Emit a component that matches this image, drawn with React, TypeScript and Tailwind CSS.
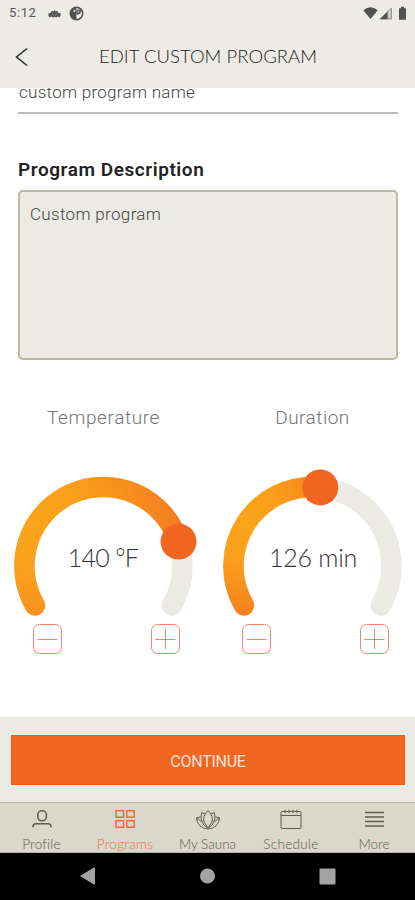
import type { ReactNode } from "react";

const ORANGE = "#f16722";

type DialProps = {
  id: string;
  value: string;
  knob: [number, number];
  spread: number;
  largeArc?: boolean;
  valueClass: string;
};

// 180 x 150 box, arc centre at (90.4, 98), radius 79
function Dial({ id, value, knob, spread, largeArc, valueClass }: DialProps) {
  const [x, y] = knob;
  return (
    <div className="relative h-[150px] w-[180px]">
      <svg width="180" height="150" viewBox="0 0 180 150" fill="none" className="overflow-visible">
        <defs>
          <radialGradient id={id} gradientUnits="userSpaceOnUse" cx="22" cy="55" r={spread}>
            <stop offset="0" stopColor="#fba51a" />
            <stop offset="0.35" stopColor="#fa9e1b" />
            <stop offset="1" stopColor="#f37421" />
          </radialGradient>
        </defs>
        <path d="M22 137.5 A79 79 0 1 1 158.8 137.5" stroke="#ebebe4" strokeWidth="20.5" strokeLinecap="round" />
        <path d={`M22 137.5 A79 79 0 ${largeArc ? 1 : 0} 1 ${x} ${y}`} stroke={`url(#${id})`} strokeWidth="20.5" strokeLinecap="butt" />
        <circle cx="22" cy="137.5" r="10.25" fill={`url(#${id})`} />
        <circle cx={x} cy={y} r="18" fill={ORANGE} />
      </svg>
      <div className={`absolute inset-x-0 top-[73px] whitespace-nowrap text-center font-[Lato,sans-serif] text-[25px] font-light leading-8 text-[#333] ${valueClass}`}>
        {value}
      </div>
    </div>
  );
}

function StepButton({ plus }: { plus?: boolean }) {
  return (
    <button className="block h-[30px] w-[29px]" aria-label={plus ? "Increase" : "Decrease"}>
      <svg width="29" height="30" viewBox="0 0 29 30" fill="none" stroke="#f3836c" strokeWidth="1">
        <rect x="0.5" y="0.5" width="28" height="29" rx="6" />
        <path d={plus ? "M4.5 15.5h20M14.5 5v20" : "M4.5 15.5h20"} />
      </svg>
    </button>
  );
}

function Tab({ label, active, labelClass = "", children }: { label: string; active?: boolean; labelClass?: string; children: ReactNode }) {
  return (
    <div className={`flex w-[83px] flex-col items-center ${active ? "text-[#f4683c]" : "text-[#5d5d55]"}`}>
      <svg width="26" height="24" viewBox="0 0 26 24" fill="none" stroke="currentColor" strokeWidth="1" className="mt-[6px] shrink-0">
        {children}
      </svg>
      <span className={`whitespace-nowrap font-[Lato,sans-serif] text-[13.5px] leading-[22px] ${labelClass}`}>{label}</span>
    </div>
  );
}

export default function App() {
  return (
    <div className="flex h-[900px] w-[415px] flex-col overflow-hidden bg-white font-[Roboto,sans-serif]">
      {/* Header */}
      <header className="h-[88px] shrink-0 bg-[#ecebe4]">
        <div className="flex h-[26px] items-center pl-[9px] pr-[7px] text-[#555]">
          <span className="text-[13px] tracking-[0.6px]">5:12</span>
          <svg width="13" height="8" viewBox="0 0 13 8" className="ml-[12px] mt-px" fill="#555">
            <path d="M1.2 7.2C.2 5.5.2 4 .6 3.2L2.6 3C3 1.5 3.7 1 4.3 1L5.2 1.5L6.5 0L7.8 1.5L8.7 1C9.5 1 10 1.5 10.4 3L12.4 3.2C12.8 4 12.8 5.5 11.8 7.2L9.6 6.5L8.4 7.5L6.5 6.7L4.6 7.5L3.4 6.5Z" />
            <path d="M4.5 3.5l.8 2M8.5 3.5l-.8 2" stroke="#ecebe4" strokeWidth="0.4" />
          </svg>
          <svg width="15" height="15" viewBox="0 0 15 15" className="ml-[8px]">
            <circle cx="7.5" cy="7.5" r="6.2" fill="#ecebe4" stroke="#505050" strokeWidth="1.6" />
            <path d="M7.2 1.3A6.2 6.2 0 0 0 4.8 13Z" fill="#505050" />
            <path d="M4.8 1.9H7.4V13.6H4.8Z" fill="#505050" />
            <path d="M4.6 3.8h1.7v2H4.6Z" fill="#ecebe4" />
            <path d="M7.4 3.4h4.4v3.4L9.6 8.6H7.4Z" fill="#505050" />
            <path d="M8.5 4.6h1.7v1.8H8.5Z" fill="#b9b8b2" />
          </svg>
          <svg width="45" height="15" viewBox="0 0 45 15" className="ml-auto" fill="#515151">
            <path d="M.3 4.2Q7.5-1.6 14.7 4.2L7.5 13Z" />
            <path d="M16.7 13.3 28.7 1.4V13.3Z" fill="#969691" />
            <path d="M16.7 13.3 24.3 5.7V13.3Z" />
            <path d="M24.8 5.7 28.2 2.3V12.8H24.8Z" fill="#d8d7d1" stroke="#777" strokeWidth="0.7" />
            <path d="M36 2.2h2V.7h3v1.5h2v11.5h-7Z" />
          </svg>
        </div>
        <div className="relative flex h-[62px] items-center justify-center">
          <svg width="14" height="20" viewBox="0 0 14 20" className="absolute left-[15px] top-[21px]" fill="none" stroke="#303030" strokeWidth="1.6">
            <path d="M12 1.5 1.5 10 12 18.5" />
          </svg>
          <h1 className="whitespace-nowrap pl-px font-[Lato,sans-serif] text-[18.5px] font-light tracking-[0.05px] text-[#222]">EDIT CUSTOM PROGRAM</h1>
        </div>
      </header>

      {/* Form */}
      <main className="h-[629px] shrink-0 overflow-hidden pl-[18px] pr-[17px]">
        <div className="-mt-[9px] h-[35px] border-b-2 border-[#bcbcbc] pt-px text-[17px] font-light leading-[24px] tracking-[0.28px] text-[#444]">
          <span className="ml-px">custom program name</span>
        </div>
        <h2 className="mt-[43px] text-[19px] font-semibold leading-[26px] tracking-[0.56px] text-[#222]">Program Description</h2>
        <div className="mt-[7px] h-[170px] rounded-[5px] border-2 border-[#babaa4] bg-[#ebebe4] px-[10px] py-[10px] text-[17px] font-light leading-[24px] tracking-[0.33px] text-[#444]">
          Custom program
        </div>

        <div className="-ml-[18px] -mr-[17px] mt-[43px] flex">
          <section className="w-[207px] pl-[13px]">
            <h3 className="w-[181px] text-center text-[19px] font-light leading-[30px] tracking-[0.6px] text-[#747474]">Temperature</h3>
            <div className="mt-[35px]">
              <Dial id="temp" value="140 °F" knob={[165.53, 73.59]} spread={165} largeArc valueClass="tracking-[-0.7px]" />
            </div>
            <div className="ml-[20px] mt-[6px] flex gap-[89px]">
              <StepButton />
              <StepButton plus />
            </div>
          </section>
          <section className="w-[208px] pl-[15px]">
            <h3 className="w-[181px] text-center text-[19px] font-light leading-[30px] tracking-[0.5px] text-[#747474]">Duration</h3>
            <div className="mt-[35px]">
              <Dial id="time" value="126 min" knob={[98.3, 19.4]} spread={115} valueClass="pl-[2px] tracking-[-0.25px]" />
            </div>
            <div className="ml-[20px] mt-[6px] flex gap-[89px]">
              <StepButton />
              <StepButton plus />
            </div>
          </section>
        </div>
      </main>

      {/* Action */}
      <div className="h-[85px] shrink-0 bg-[#ebebe4] pl-[11px] pr-[10px] pt-[18px]">
        <button className="block h-[50px] w-full border border-[#e95b18] bg-[#f16722] pt-[3px] text-[16px] tracking-[-0.25px] text-[#ffe3da]">CONTINUE</button>
      </div>

      {/* Tabs */}
      <nav className="flex h-[51px] shrink-0 border-y border-[#b5b5a9] bg-[#d9d8ca]">
        <Tab label="Profile" labelClass="font-light tracking-[0.2px]">
          <rect x="8.8" y="1.8" width="8.6" height="10" rx="4" strokeWidth="1.6" />
          <path d="M4 18.3v-.8Q4 14.8 7 14.8h12q3 0 3 2.7v.8" strokeWidth="1.6" />
        </Tab>
        <Tab label="Programs" active labelClass="pl-px font-light tracking-[0.3px]">
          <g strokeWidth="1.5">
            <rect x="4" y="1.7" width="7.5" height="6.5" />
            <rect x="14.7" y="1.7" width="7.5" height="6.5" />
            <rect x="4" y="11.7" width="7.5" height="6.5" />
            <rect x="14.7" y="11.7" width="7.5" height="6.5" />
          </g>
        </Tab>
        <Tab label="My Sauna" labelClass="font-light">
          <path d="M13 1.5Q6.5 8 9.5 14L13 18.5L16.5 14Q19.5 8 13 1.5Z" />
          <path d="M10 5 6.7 3.5Q4.7 10 8 15L13 19.5L18 15Q21.3 10 19.3 3.5L16 5" />
          <path d="M5.5 7.8 1.5 9Q2.5 19 13 20Q23.5 19 24.5 9L20.5 7.8M1.5 9Q4 10 6.5 13M24.5 9Q22 10 19.5 13" />
        </Tab>
        <Tab label="Schedule" labelClass="pl-px font-light tracking-[0.3px]">
          <rect x="3" y="2.5" width="20" height="17" rx="1" />
          <path d="M3 6.5h20M7 .8v3.5M11 .8v3.5M15 .8v3.5M19 .8v3.5" />
        </Tab>
        <Tab label="More" labelClass="pl-px font-light">
          <path d="M4 3.5h19M4 8h19M4 12.5h19M4 17h19" strokeWidth="1.5" />
        </Tab>
      </nav>

      {/* System navigation */}
      <div className="flex h-[47px] shrink-0 items-center bg-black">
        <svg width="415" height="47" viewBox="0 0 415 47" fill="#a3a3a3">
          <path d="M80 23 94 14.5Q95 14 95 15V31Q95 32 94 31.5Z" />
          <circle cx="207.5" cy="23" r="7.5" />
          <rect x="319.5" y="15.5" width="16" height="16" rx="1" />
        </svg>
      </div>
    </div>
  );
}
